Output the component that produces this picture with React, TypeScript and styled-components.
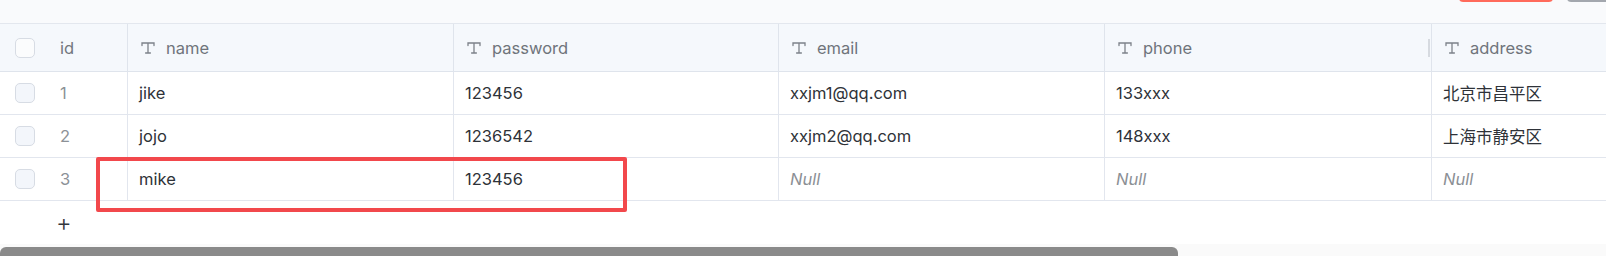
import React from 'react';
import styled, {createGlobalStyle} from 'styled-components';

const GlobalStyle = createGlobalStyle`
  body {
    margin: 0;
    background: #ffffff;
    font-family: Inter, "Noto Sans CJK SC", sans-serif;
  }
`

type Column = { key: string; width: number }

const columns: Column[] = [
    {key: 'name', width: 326},
    {key: 'password', width: 325},
    {key: 'email', width: 326},
    {key: 'phone', width: 327},
    {key: 'address', width: 300},
]

type Row = { id: number; [k: string]: string | number | null }

const rows: Row[] = [
    {id: 1, name: 'jike', password: '123456', email: 'xxjm1@qq.com', phone: '133xxx', address: '北京市昌平区'},
    {id: 2, name: 'jojo', password: '1236542', email: 'xxjm2@qq.com', phone: '148xxx', address: '上海市静安区'},
    {id: 3, name: 'mike', password: '123456', email: null, phone: null, address: null},
]

const template = `48px 79px ${columns.map(c => c.width + 'px').join(' ')}`

const TextIcon = () => (
    <svg width="14" height="12" viewBox="0 0 14 12" fill="none" stroke="#7c8189" strokeWidth="1.3" strokeLinecap="round">
        <path d="M1 3.6V1h12v2.6M7 1v10M4.6 11h4.8"/>
    </svg>
)

const App = () => {
    return (
        <Page>
            <GlobalStyle/>
            <Toolbar>
                <ToolButton color="#ff6a5b" width={94}/>
                <ToolButton color="#a3a7ae" width={50}/>
            </Toolbar>
            <TableWrap>
                <Table>
                    <HeaderRow>
                        <CheckCell><Checkbox head/></CheckCell>
                        <IdCell head>id</IdCell>
                        {columns.map((c, i) => (
                            <HeadCell key={c.key} handle={i === 3}>
                                <TextIcon/>
                                <span>{c.key}</span>
                            </HeadCell>
                        ))}
                    </HeaderRow>
                    {rows.map(r => (
                        <BodyRow key={r.id}>
                            <CheckCell><Checkbox/></CheckCell>
                            <IdCell>{r.id}</IdCell>
                            {columns.map(c => (
                                <DataCell key={c.key} empty={r[c.key] == null}>
                                    {r[c.key] == null ? 'Null' : r[c.key]}
                                </DataCell>
                            ))}
                        </BodyRow>
                    ))}
                    <Highlight/>
                </Table>
                <AddRow>+</AddRow>
            </TableWrap>
            <ScrollTrack>
                <ScrollThumb/>
            </ScrollTrack>
        </Page>
    );
};

const Page = styled.div`
  width: 1606px;
  height: 256px;
  overflow: hidden;
  display: flex;
  flex-direction: column;
  background: #ffffff;
`

const Toolbar = styled.div`
  height: 23px;
  flex-shrink: 0;
  display: flex;
  justify-content: flex-end;
  align-items: flex-start;
  gap: 14px;
  background: #f9fafc;
  border-bottom: 1px solid #e3e7ee;
  overflow: hidden;
`

const ToolButton = styled.div<{ color: string; width: number }>`
  width: ${p => p.width}px;
  height: 32px;
  margin-top: -30px;
  border-radius: 4px;
  background: ${p => p.color};
  &:last-child {
    margin-right: -11px;
  }
`

const TableWrap = styled.div`
  flex: 1;
  overflow: hidden;
`

const Table = styled.div`
  position: relative;
  width: max-content;
`

const HeaderRow = styled.div`
  display: grid;
  grid-template-columns: ${template};
  height: 48px;
  background: #f5f8fc;
  border-bottom: 1px solid #dfe4ec;
  box-sizing: border-box;
`

const BodyRow = styled.div`
  display: grid;
  grid-template-columns: ${template};
  height: 43px;
  border-bottom: 1px solid #e2e6ee;
  box-sizing: border-box;
`

const CheckCell = styled.div`
  display: flex;
  align-items: center;
  padding-left: 15px;
`

const Checkbox = styled.div<{ head?: boolean }>`
  width: 20px;
  height: 20px;
  box-sizing: border-box;
  border: 1px solid #d7dce4;
  border-radius: 5px;
  background: ${p => p.head ? '#fbfcfd' : '#f3f6fb'};
`

const IdCell = styled.div<{ head?: boolean }>`
  display: flex;
  align-items: center;
  padding-left: 12px;
  font-size: 16.5px;
  color: ${p => p.head ? '#72777e' : '#8c9197'};
`

const HeadCell = styled.div<{ handle?: boolean }>`
  position: relative;
  display: flex;
  align-items: center;
  gap: 11px;
  padding-left: 13px;
  border-left: 1px solid #dfe4ec;
  font-size: 16.5px;
  color: #6f747b;
  &::after {
    content: '';
    display: ${p => p.handle ? 'block' : 'none'};
    position: absolute;
    right: 1px;
    top: 15px;
    width: 2px;
    height: 18px;
    background: #d6dae0;
  }
`

const DataCell = styled.div<{ empty?: boolean }>`
  display: flex;
  align-items: center;
  padding-left: 11px;
  border-left: 1px solid #e2e6ee;
  font-size: 16.5px;
  color: ${p => p.empty ? '#8b8f95' : '#2e3238'};
  font-style: ${p => p.empty ? 'italic' : 'normal'};
  white-space: nowrap;
`

const Highlight = styled.div`
  position: absolute;
  left: 96px;
  top: 133px;
  width: 531px;
  height: 55px;
  box-sizing: border-box;
  border: 4px solid #f2484c;
  border-radius: 2px;
  pointer-events: none;
`

const AddRow = styled.div`
  height: 43px;
  display: flex;
  align-items: center;
  padding-left: 56px;
  font-size: 24px;
  font-weight: 300;
  color: #33373d;
`

const ScrollTrack = styled.div`
  height: 12px;
  flex-shrink: 0;
  background: #fafafa;
  padding-top: 3px;
  box-sizing: border-box;
`

const ScrollThumb = styled.div`
  width: 1178px;
  height: 14px;
  background: #8a8a8a;
  border-radius: 6px;
`

export default App;
